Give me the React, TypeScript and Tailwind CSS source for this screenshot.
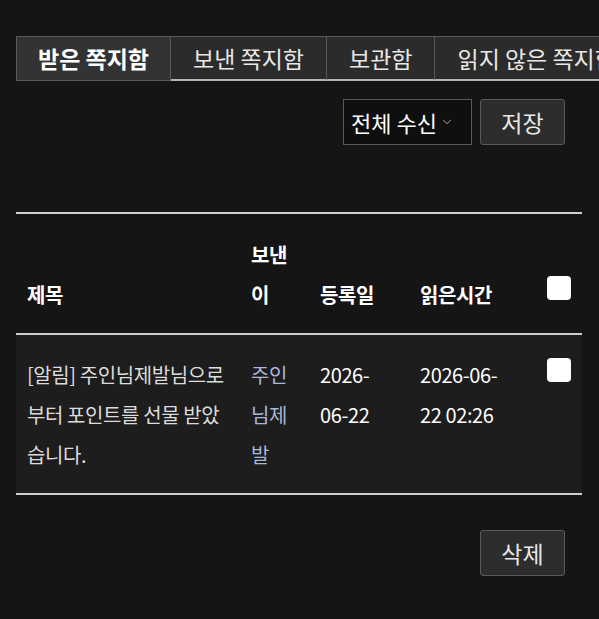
import { ChevronDown } from 'lucide-react';

const tabs = ['받은 쪽지함', '보낸 쪽지함', '보관함', '읽지 않은 쪽지함'];

const font = { fontFamily: '"Noto Sans CJK KR", "Noto Sans", sans-serif' };

function Box() {
  return <span className="block w-6 h-6 rounded-[4px] bg-white" />;
}

export default function App() {
  return (
    <div
      className="min-h-screen w-full overflow-hidden bg-[#151515] text-[#e6e6e6] pt-9 pl-4 pr-[17px] pb-10"
      style={font}
    >
      {/* mailbox tabs */}
      <div className="flex whitespace-nowrap">
        {tabs.map((t, i) => (
          <div
            key={t}
            className={
              i === 0
                ? 'h-[45px] px-[21px] flex items-center shrink-0 border border-[#5a5a5a] bg-[#333333] text-[23px] font-bold text-white'
                : 'h-[45px] px-[22px] flex items-center shrink-0 border border-l-0 border-[#5a5a5a] border-b-2 border-b-[#b5b5b5] bg-[#2b2b2b] text-[23px] text-[#e8e8e8]'
            }
          >
            {t}
          </div>
        ))}
      </div>

      {/* receive setting */}
      <div className="flex justify-end gap-2 mt-[18px] pr-[17px]">
        <div className="h-[46px] w-[129px] flex items-center pl-[7px] gap-[3px] border border-[#5a5a5a] bg-[#0f0f0f] text-[22px] text-white whitespace-nowrap">
          <span>전체 수신</span>
          <ChevronDown className="w-3.5 h-3.5 text-[#bbbbbb]" strokeWidth={1.5} />
        </div>
        <button className="h-[46px] w-[85px] rounded-[3px] border border-[#5a5a5a] bg-[#2d2d2d] text-[23px] text-[#e8e8e8]">
          저장
        </button>
      </div>

      {/* message list */}
      <table className="mt-[67px] w-full table-fixed border-collapse text-[20px] tracking-[-0.4px] whitespace-nowrap">
        <colgroup>
          <col className="w-[224px]" />
          <col className="w-[69px]" />
          <col className="w-[100px]" />
          <col className="w-[127px]" />
          <col />
        </colgroup>
        <thead>
          <tr className="border-t-2 border-b-2 border-[#cfcfcf] font-bold text-white leading-[40px]">
            <th className="text-left align-bottom pl-[11px] pb-[18px]">제목</th>
            <th className="text-left align-bottom pl-[11px] pt-[21px] pb-[18px]">
              보낸
              <br />이
            </th>
            <th className="text-left align-bottom pl-[11px] pb-[18px]">등록일</th>
            <th className="text-left align-bottom pl-[11px] pb-[18px]">읽은시간</th>
            <th className="text-left align-bottom pl-[11px] pb-[33px]">
              <Box />
            </th>
          </tr>
        </thead>
        <tbody>
          <tr className="border-b-2 border-[#cfcfcf] bg-[#1d1d1d] leading-[40px] text-[#dcdcdc]">
            <td className="align-top pl-[11px] pt-[20px] pb-[18px]">
              [알림] 주인님제발님으로
              <br />
              부터 포인트를 선물 받았
              <br />
              습니다.
            </td>
            <td className="align-top pl-[11px] pt-[20px] text-[#aab6d8]">
              주인
              <br />
              님제
              <br />발
            </td>
            <td className="align-top pl-[11px] pt-[20px] text-white">
              2026-
              <br />
              06-22
            </td>
            <td className="align-top pl-[11px] pt-[20px] text-white">
              2026-06-
              <br />
              22 02:26
            </td>
            <td className="align-top pl-[11px] pt-[23px]">
              <Box />
            </td>
          </tr>
        </tbody>
      </table>

      <div className="flex justify-end mt-[35px] pr-[17px]">
        <button className="h-[46px] w-[85px] rounded-[3px] border border-[#5a5a5a] bg-[#2d2d2d] text-[23px] text-[#e8e8e8]">
          삭제
        </button>
      </div>
    </div>
  );
}
